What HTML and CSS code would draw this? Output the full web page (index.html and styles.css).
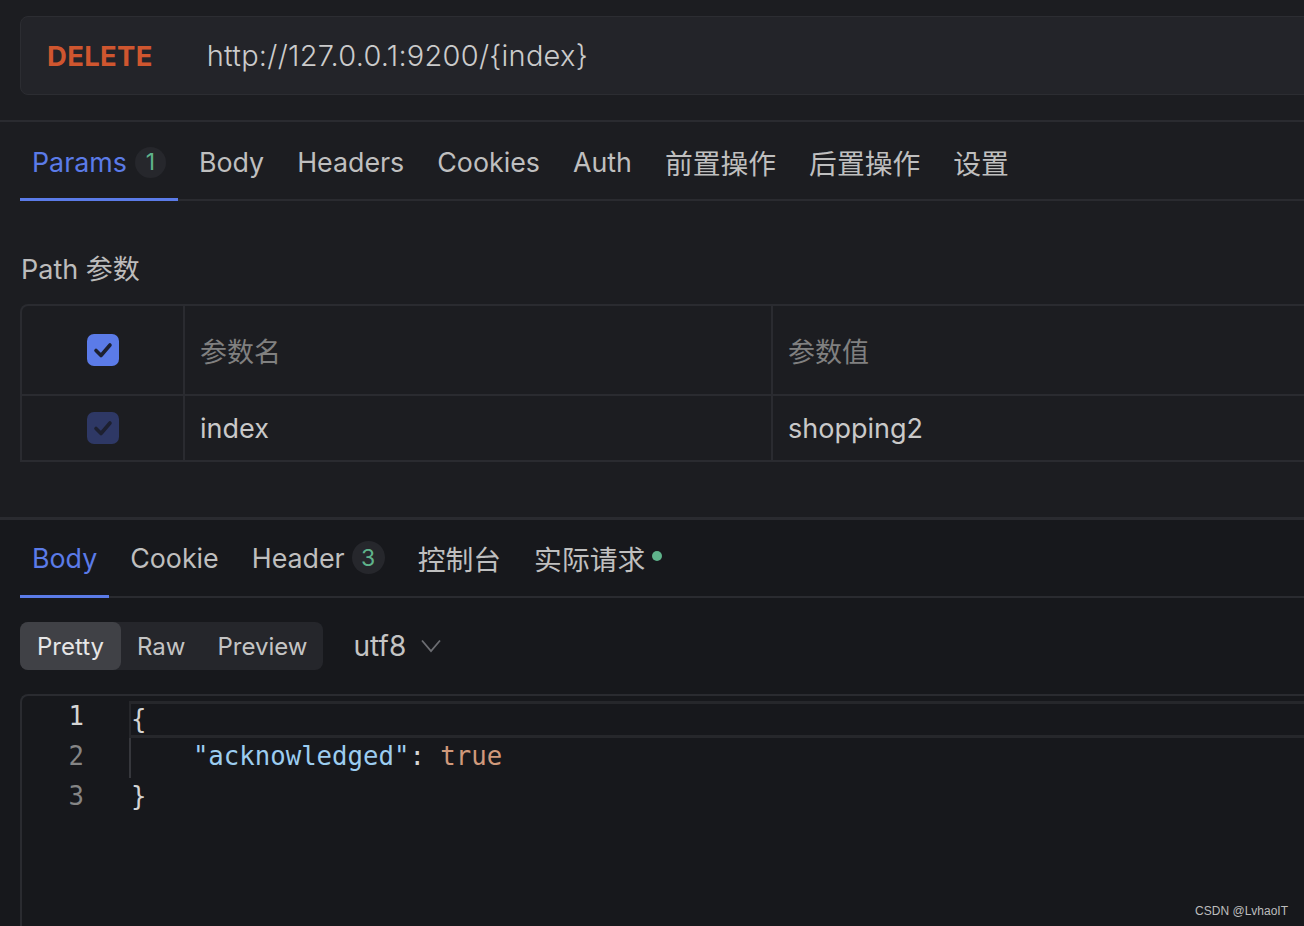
FILE: index.html
```html
<!DOCTYPE html>
<html lang="zh-CN">
<head>
    <meta charset="UTF-8">
    <meta name="viewport" content="width=device-width, initial-scale=1.0">
    <title>DELETE {index}</title>
    <link rel="stylesheet" href="styles.css">
</head>
<body>
    <div class="request">
        <div class="url-bar">
            <span class="method">DELETE</span>
            <span class="url">http://127.0.0.1:9200/{index}</span>
        </div>

        <div class="request-body">
            <nav class="tabs">
                <span class="tab active">Params<span class="badge">1</span></span>
                <span class="tab">Body</span>
                <span class="tab">Headers</span>
                <span class="tab">Cookies</span>
                <span class="tab">Auth</span>
                <span class="tab cjk">前置操作</span>
                <span class="tab cjk">后置操作</span>
                <span class="tab cjk">设置</span>
            </nav>

            <h3 class="section-title">Path 参数</h3>
            <div class="param-table">
                <div class="param-row head">
                    <div class="cell check">
                        <svg class="checkbox" width="32" height="32" viewBox="0 0 32 32">
                            <rect width="32" height="32" rx="7" fill="#5b7be8"/>
                            <path d="M9 16.5 L14 21.5 L23 11" fill="none" stroke="#1d2030" stroke-width="3.6" stroke-linecap="round" stroke-linejoin="round"/>
                        </svg>
                    </div>
                    <div class="cell">参数名</div>
                    <div class="cell">参数值</div>
                </div>
                <div class="param-row">
                    <div class="cell check">
                        <svg class="checkbox" width="32" height="32" viewBox="0 0 32 32">
                            <rect width="32" height="32" rx="7" fill="#2e3865"/>
                            <path d="M9 16.5 L14 21.5 L23 11" fill="none" stroke="#1d2030" stroke-width="3.6" stroke-linecap="round" stroke-linejoin="round"/>
                        </svg>
                    </div>
                    <div class="cell">index</div>
                    <div class="cell">shopping2</div>
                </div>
            </div>
        </div>
    </div>

    <div class="response">
        <nav class="tabs">
            <span class="tab active">Body</span>
            <span class="tab">Cookie</span>
            <span class="tab">Header<span class="badge">3</span></span>
            <span class="tab cjk">控制台</span>
            <span class="tab cjk">实际请求<span class="dot"></span></span>
        </nav>

        <div class="toolbar">
            <div class="segmented">
                <span class="seg active">Pretty</span>
                <span class="seg">Raw</span>
                <span class="seg">Preview</span>
            </div>
            <div class="encoding">
                utf8
                <svg width="20" height="14" viewBox="0 0 20 14">
                    <path d="M1 1.5 L10 12 L19 1.5" fill="none" stroke="#6c6d72" stroke-width="1.8"/>
                </svg>
            </div>
        </div>

        <div class="editor">
            <div class="line active">
                <span class="ln">1</span>
                <span class="code"><span class="p">{</span></span>
            </div>
            <div class="line guide">
                <span class="ln">2</span>
                <span class="code">    <span class="s">"acknowledged"</span><span class="p">: </span><span class="b">true</span></span>
            </div>
            <div class="line">
                <span class="ln">3</span>
                <span class="code"><span class="p">}</span></span>
            </div>
        </div>
    </div>

    <div class="watermark">CSDN @LvhaoIT</div>
</body>
</html>
```

FILE: styles.css
```css
* {
    margin: 0;
    padding: 0;
    box-sizing: border-box;
}

body {
    display: flex;
    flex-direction: column;
    width: 1304px;
    height: 926px;
    overflow: hidden;
    background: #1c1d21;
    color: #c4c4c4;
    font-family: Inter, "Noto Sans CJK SC", sans-serif;
    position: relative;
}

/* request area */

.request {
    padding-top: 16px;
}

.url-bar {
    display: flex;
    align-items: center;
    height: 79px;
    margin: 0 -20px 25px 20px;
    padding-left: 26px;
    background: #232429;
    border: 1px solid #2c2d32;
    border-radius: 8px;
}

.method {
    color: #cf562f;
    font-size: 27.5px;
    font-weight: 700;
    letter-spacing: 0.3px;
}

.url {
    margin-left: 54px;
    font-size: 29px;
    font-weight: 300;
    letter-spacing: 0.25px;
    color: #cbcbcb;
}

.request-body {
    border-top: 2px solid #2a2b30;
    padding-bottom: 55px;
}

/* tabs */

.tabs {
    display: flex;
    gap: 9px;
    margin-left: 20px;
    border-bottom: 2px solid #2a2b30;
}

.tab {
    display: flex;
    align-items: center;
    height: 79px;
    padding: 4px 12px 0;
    margin-bottom: -2px;
    border-bottom: 3px solid transparent;
    font-size: 26.8px;
    color: #bfbfbf;
    white-space: nowrap;
}

.tab.cjk {
    font-size: 27.8px;
}

.response .tab {
    height: 78px;
    padding-top: 0;
}

.tab.active {
    color: #5b7be8;
    border-bottom-color: #5b7be8;
}

.badge {
    display: inline-flex;
    align-items: center;
    justify-content: center;
    width: 31px;
    height: 31px;
    margin-left: 8px;
    border-radius: 50%;
    background: #26272c;
    color: #5fb38b;
    font-size: 23px;
}

.response .badge {
    margin-left: 7px;
    width: 33px;
    height: 33px;
}

.dot {
    display: inline-block;
    width: 10px;
    height: 10px;
    margin: 0 0 3px 7px;
    border-radius: 50%;
    background: #5fb38b;
}

/* params table */

.section-title {
    margin: 54px 0 19px 21px;
    font-size: 27px;
    font-weight: 400;
    line-height: 30px;
    color: #bcbcbc;
}

.param-table {
    margin: 0 -20px 0 20px;
    border: 2px solid #2a2b30;
    border-bottom: none;
    border-radius: 8px 8px 0 0;
}

.param-row {
    display: grid;
    grid-template-columns: 161px 588px 1fr;
    height: 66px;
    border-bottom: 2px solid #2a2b30;
    font-size: 27px;
    color: #c9c9c9;
}

.param-row.head {
    height: 90px;
    color: #808080;
}

.cell {
    display: flex;
    align-items: center;
    padding-left: 15px;
    border-left: 2px solid #2a2b30;
}

.cell.check {
    justify-content: center;
    padding: 0;
    border-left: none;
}

/* response area */

.response {
    display: flex;
    flex-direction: column;
    flex: 1;
    min-height: 0;
    border-top: 3px solid #2a2b30;
    background: #17181c;
}

.toolbar {
    display: flex;
    align-items: center;
    gap: 30px;
    margin: 24px 0 24px 20px;
}

.segmented {
    display: flex;
    height: 48px;
    background: #25262b;
    border-radius: 8px;
}

.seg {
    display: flex;
    align-items: center;
    padding: 0 16px;
    font-size: 24px;
    color: #c4c4c4;
    border-radius: 8px;
}

.seg.active {
    padding: 0 17px;
    background: #404146;
    color: #e6e6e6;
}

.encoding {
    display: flex;
    align-items: center;
    gap: 15px;
    font-size: 28px;
    color: #c4c4c4;
}

/* editor */

.editor {
    flex: 1;
    margin-left: 20px;
    padding-top: 2px;
    border-top: 2px solid #2a2b30;
    border-left: 2px solid #2a2b30;
    border-top-left-radius: 8px;
    font-family: "DejaVu Sans Mono", monospace;
    font-size: 25.7px;
}

.line {
    display: flex;
    height: 40px;
    line-height: 36px;
}

.ln {
    width: 107px;
    padding-right: 45px;
    text-align: right;
    color: #858585;
}

.line.active .ln {
    color: #d4d4d4;
}

.code {
    flex: 1;
    border-left: 2px solid transparent;
    white-space: pre;
}

.line.active .code {
    margin-top: 3px;
    border: 3px solid #26272b;
    border-left-width: 2px;
    border-right: none;
    line-height: 30px;
}

.line.guide .code {
    border-left-color: #36373c;
}

.p { color: #d4d4d4; }
.s { color: #9ccdf0; }
.b { color: #d0997b; }

.watermark {
    position: absolute;
    right: 16px;
    bottom: 8px;
    font-family: "Liberation Sans", sans-serif;
    font-size: 12px;
    color: #bdbdbd;
}
```
